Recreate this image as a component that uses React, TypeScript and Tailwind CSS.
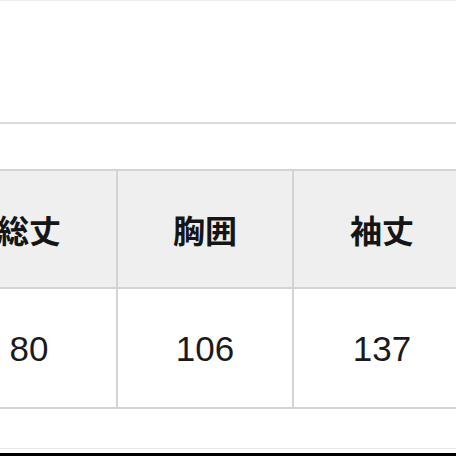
const FONT = "font-['Noto_Sans_CJK_JP','Noto_Sans',sans-serif]";

const headers = ["総丈", "胸囲", "袖丈"];
const values = ["80", "106", "137"];

export default function App() {
  return (
    <div className={`w-[456px] h-[456px] overflow-hidden bg-white flex flex-col ${FONT}`}>
      <div className="h-px bg-[#ececec]" />
      <div className="h-[121px]" />
      <div className="h-[2px] bg-[#dadada]" />
      <div className="h-[45px]" />

      {/* Size table */}
      <div className="ml-[-58px] w-[530px] flex flex-col border-t-2 border-b-2 border-[#d3d3d3]">
        <div className="flex h-[116px] bg-[#efefef]">
          {headers.map((h, i) => (
            <div
              key={h}
              className={`w-[176px] shrink-0 flex items-center justify-center text-[32px] font-bold text-[#151515] border-[#d3d3d3] ${i < 2 ? "border-r-2" : ""}`}
            >
              {h}
            </div>
          ))}
        </div>
        <div className="h-[2px] bg-[#d3d3d3]" />
        <div className="flex h-[118px] bg-white">
          {values.map((v, i) => (
            <div
              key={v}
              className={`w-[176px] shrink-0 flex items-center justify-center pt-[3px] text-[35px] font-['Liberation_Sans','Noto_Sans',sans-serif] text-[#1a1a1a] border-[#d3d3d3] ${i < 2 ? "border-r-2" : ""}`}
            >
              {v}
            </div>
          ))}
        </div>
      </div>

      <div className="h-[39px]" />
      <div className="h-px bg-[#e6e6e6]" />
      <div className="flex-1" />
      <div className="h-[3px] bg-black" />
    </div>
  );
}
